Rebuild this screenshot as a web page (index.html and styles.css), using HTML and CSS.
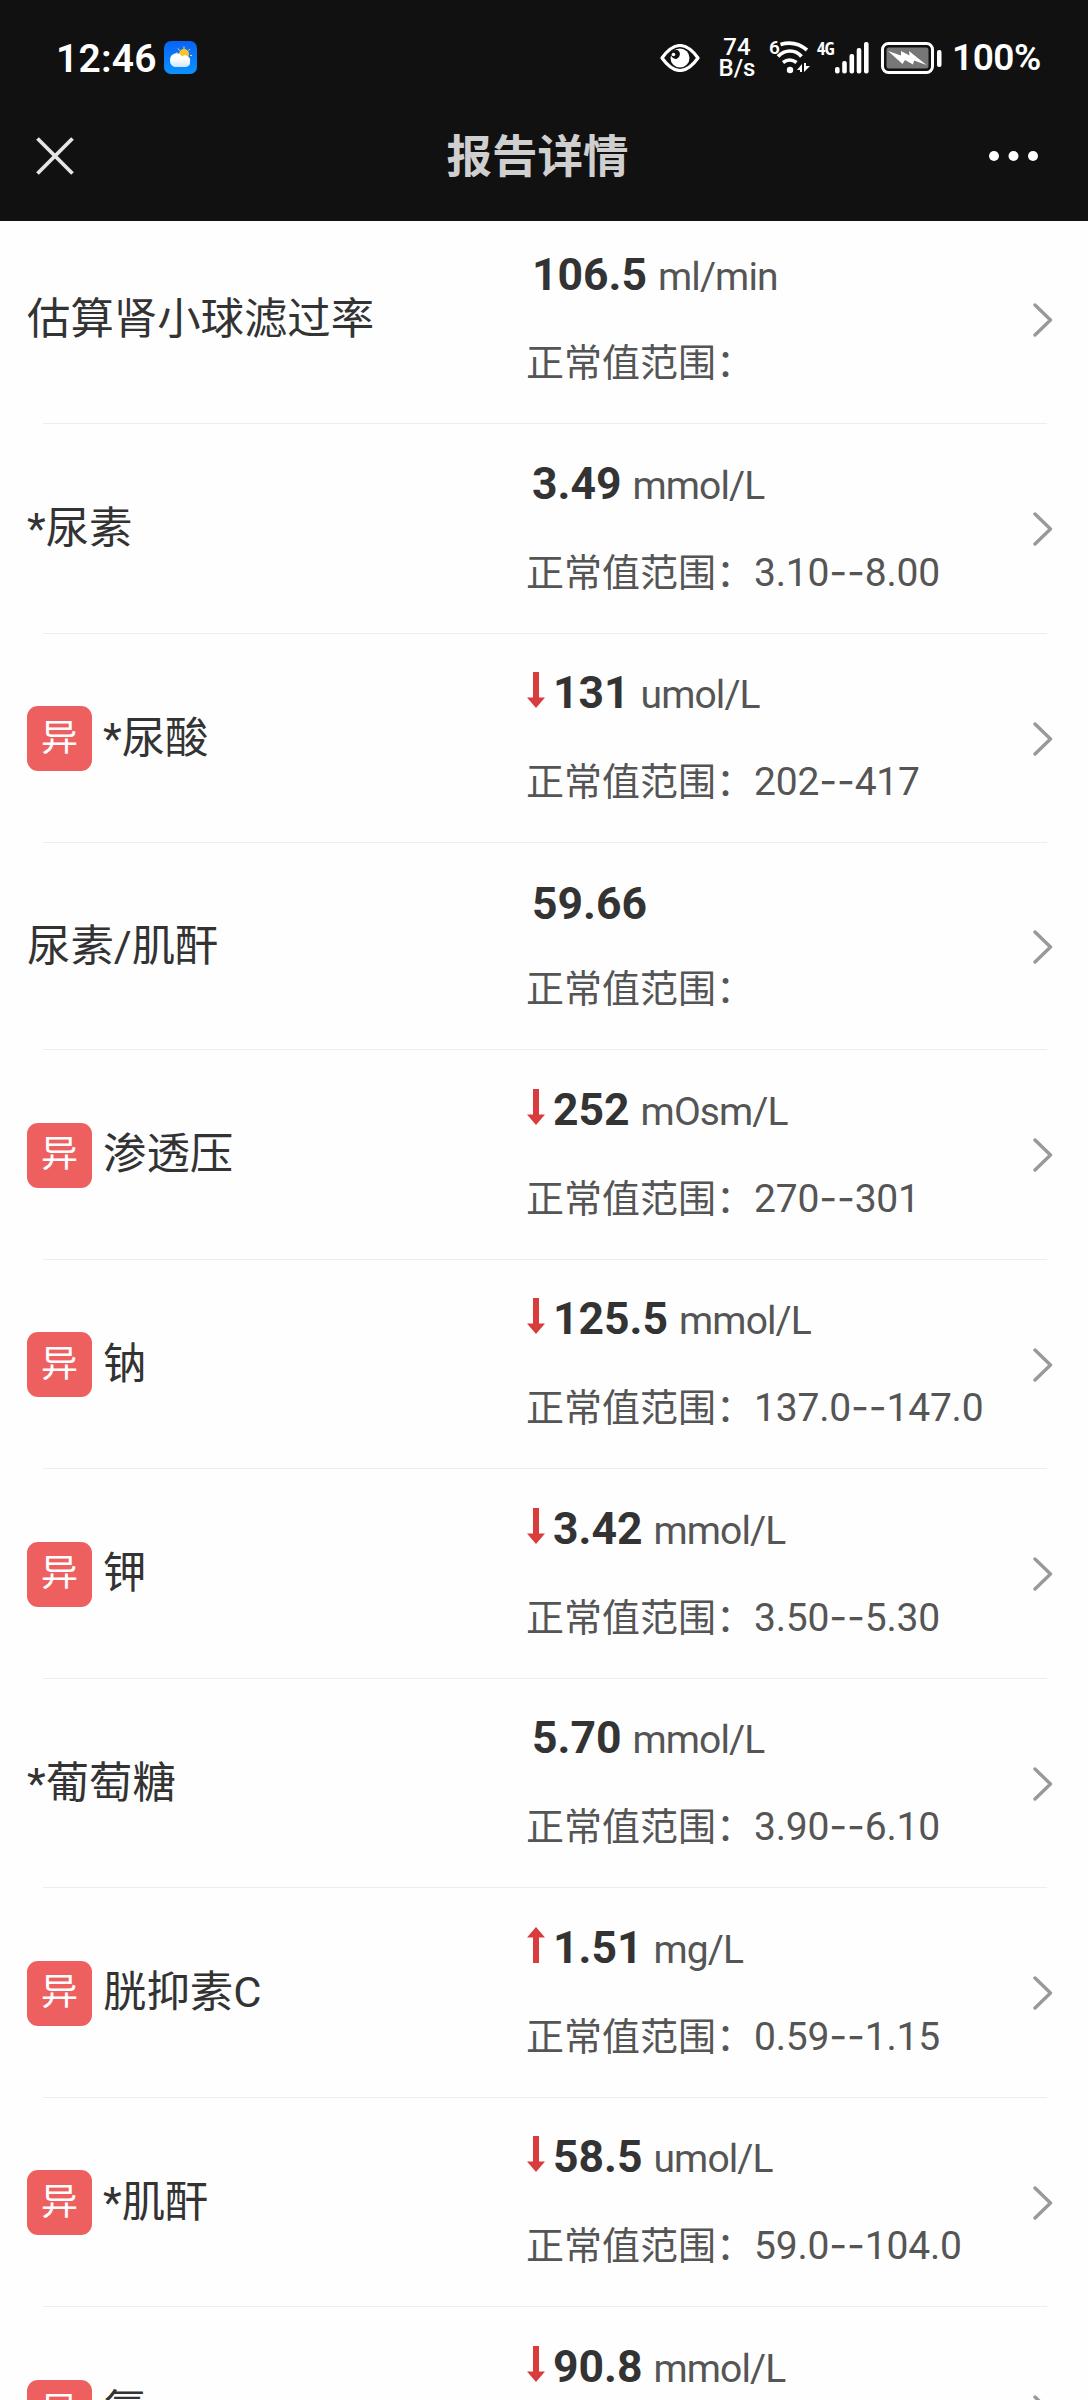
FILE: index.html
```html
<!DOCTYPE html>
<html lang="zh-CN">
<head>
    <meta charset="UTF-8">
    <meta name="viewport" content="width=device-width, initial-scale=1.0">
    <title>报告详情</title>
    <link rel="stylesheet" href="styles.css">
</head>
<body>
    <header class="header">
        <div class="status-bar">
            <span class="time">12:46</span>
            <svg class="weather" width="33" height="33" viewBox="0 0 33 33">
                <defs>
                    <linearGradient id="sky" x1="0" y1="0" x2="0" y2="1">
                        <stop offset="0" stop-color="#0a62f5"/>
                        <stop offset="1" stop-color="#0a93ff"/>
                    </linearGradient>
                    <linearGradient id="cloud" x1="0" y1="0" x2="0" y2="1">
                        <stop offset="0.4" stop-color="#fff"/>
                        <stop offset="1" stop-color="#cfe6fb"/>
                    </linearGradient>
                </defs>
                <rect width="33" height="33" rx="7" fill="url(#sky)"/>
                <path d="M20 8V5.500M15.500 9.500L14 7.500M24.500 9.500L26 8M26 14.500H28M13.500 12L12.500 11.500" stroke="#f8dc7a" stroke-width="1"/>
                <circle cx="20" cy="13" r="5" fill="#fcc52c"/>
                <path d="M11 26a5.500 6.500 0 0 1-5-7a6.500 7 0 0 1 12-3.500a5 5 0 0 1 8 5a5 5 0 0 1-4 5.500z" fill="url(#cloud)"/>
            </svg>
            <svg class="eye" width="40" height="28" viewBox="0 0 40 28">
                <path d="M2 14Q20-11 38 14Q20 39 2 14z" fill="none" stroke="#fff" stroke-width="3.200" stroke-linejoin="round"/>
                <circle cx="20" cy="14" r="9.500" fill="#fff"/>
                <path d="M11 9.500a6 6 0 0 1 6.500-3.500a5 5 0 0 1-1 9a5 5 0 0 1-5.500-5.500z" fill="#111"/>
                <circle cx="13.500" cy="10.500" r="1.800" fill="#fff"/>
            </svg>
            <div class="speed"><span>74</span><span>B/s</span></div>
            <span class="wifi-gen">6</span>
            <svg class="wifi" width="34" height="34" viewBox="0 0 34 34">
                <g fill="none" stroke="#fff" stroke-width="3.600">
                    <path d="M2 15.500Q7 10 14 10T25.500 15.500"/>
                    <path d="M4.500 3.500Q19-1 31 9"/>
                    <path d="M7 21.500Q13.500 16.500 20.500 21.500"/>
                </g>
                <circle cx="14" cy="29" r="3.200" fill="#fff"/>
                <path d="M21 29l5-6v8h-2v-2zM28 22v9l6-6h-4v-3z" fill="#fff"/>
            </svg>
            <span class="net">4G</span>
            <svg class="signal" width="34" height="32" viewBox="0 0 34 32">
                <g fill="#fff">
                    <rect x="0" y="25" width="4.600" height="6.500" rx="2"/>
                    <rect x="7.200" y="19" width="4.600" height="12.500" rx="2"/>
                    <rect x="14.500" y="12" width="4.600" height="19.500" rx="2"/>
                    <rect x="21.700" y="6" width="4.600" height="25.500" rx="2"/>
                    <rect x="29" y="0" width="4.600" height="31.500" rx="2"/>
                </g>
            </svg>
            <svg class="battery" width="62" height="32" viewBox="0 0 62 32">
                <rect x="1.500" y="1.500" width="50" height="29" rx="6" fill="none" stroke="#fff" stroke-width="3"/>
                <rect x="5.500" y="5.500" width="42" height="21" rx="2.500" fill="#777"/>
                <path d="M7 9L20 13.500L20 9L28.500 13.500L28 9L45.500 23L33 18.500L32 22.500L24 18L21.500 22z" fill="#fff"/>
                <rect x="56" y="8" width="4.500" height="17" rx="2" fill="#fff"/>
            </svg>
            <span class="percent">100%</span>
        </div>
        <div class="nav-bar">
            <svg width="38" height="38" viewBox="0 0 38 38">
                <path d="M1.500 1.500L36.500 36.500M36.500 1.500L1.500 36.500" stroke="#e6e6e6" stroke-width="3.800"/>
            </svg>
            <h1>报告详情</h1>
            <svg width="50" height="12" viewBox="0 0 50 12" fill="#fff">
                <circle cx="6" cy="6" r="5"/>
                <circle cx="25.500" cy="6" r="5"/>
                <circle cx="45" cy="6" r="5"/>
            </svg>
        </div>
    </header>

    <main class="list" id="lista"></main>

    <script>
        const items = [
            { name: '估算肾小球滤过率', value: '106.5', unit: 'ml/min', range: '' },
            { name: '*尿素', value: '3.49', unit: 'mmol/L', range: '3.10--8.00' },
            { name: '*尿酸', value: '131', unit: 'umol/L', range: '202--417', flag: 'down' },
            { name: '尿素/肌酐', value: '59.66', unit: '', range: '' },
            { name: '渗透压', value: '252', unit: 'mOsm/L', range: '270--301', flag: 'down' },
            { name: '钠', value: '125.5', unit: 'mmol/L', range: '137.0--147.0', flag: 'down' },
            { name: '钾', value: '3.42', unit: 'mmol/L', range: '3.50--5.30', flag: 'down' },
            { name: '*葡萄糖', value: '5.70', unit: 'mmol/L', range: '3.90--6.10' },
            { name: '胱抑素C', value: '1.51', unit: 'mg/L', range: '0.59--1.15', flag: 'up' },
            { name: '*肌酐', value: '58.5', unit: 'umol/L', range: '59.0--104.0', flag: 'down' },
            { name: '氯', value: '90.8', unit: 'mmol/L', range: '', flag: 'down' }
        ];

        const arrows = {
            down: 'M6 0h6v25.500h6L9 36L0 25.500h6z',
            up: 'M9 0l9 10.500h-6V36H6V10.500H0z'
        };

        document.getElementById('lista').innerHTML = items.map(item => `
            <div class="item ${item.unit ? '' : 'no-unit'}">
                <div class="name">
                    ${item.flag ? '<span class="badge">异</span>' : ''}
                    <span>${item.name}</span>
                </div>
                <div class="result">
                    <div class="value ${item.flag ? 'flagged' : ''}">
                        ${item.flag ? `<svg width="18" height="36" viewBox="0 0 18 36"><path d="${arrows[item.flag]}" fill="#d83c3c"/></svg>` : ''}
                        <b>${item.value}</b>
                        <span class="unit">${item.unit}</span>
                    </div>
                    <div class="range">正常值范围：<span class="limits">${item.range.replace('--', '<i>--</i>')}</span></div>
                </div>
                <svg class="chevron" width="20" height="34" viewBox="0 0 20 34">
                    <path d="M2 2L17.500 17L2 32" fill="none" stroke="#999" stroke-width="3.400" stroke-linecap="round" stroke-linejoin="round"/>
                </svg>
            </div>
        `).join('');
    </script>
</body>
</html>
```

FILE: styles.css
```css
* { box-sizing: border-box; }
body { margin: 0; height: 2400px; overflow: hidden; background: #fefefe; color: #333; font-family: Roboto, "Noto Sans CJK SC", sans-serif; }
svg { display: block; flex: none; }

.header { height: 221px; background: #111; color: #fff; }
.status-bar { display: flex; align-items: center; height: 115px; padding-left: 56px; white-space: nowrap; }
.time { width: 108px; padding-top: 2px; font-size: 39px; font-weight: 600; letter-spacing: 0.2px; }
.eye { margin-left: 463px; }
.speed { display: flex; flex-direction: column; align-items: center; width: 36px; margin-left: 19px; font-size: 24px; line-height: 21px; font-weight: 500; }
.wifi-gen { width: 8px; margin: -20px 0 0 14px; font-size: 19px; line-height: 20px; font-weight: 600; }
.wifi { margin-left: -1px; }
.net { width: 18px; margin: -20px 0 0 7px; font: 700 18px/20px "Open Sans", sans-serif; font-stretch: 75%; letter-spacing: -1px; }
.signal { margin-left: 0; }
.battery { margin-left: 12px; }
.percent { margin-left: 9px; font-size: 37px; font-weight: 600; letter-spacing: -0.5px; }

.nav-bar { display: flex; align-items: center; justify-content: space-between; height: 82px; padding: 0 50px 0 36px; }
.nav-bar h1 { margin: 0; padding: 4px 0 0 13px; font-size: 45.500px; font-weight: 700; line-height: 60px; color: #cfcfcf; }

.item { display: flex; align-items: center; height: 209.500px; padding: 1px 35px 0 27px; background: linear-gradient(#eee, #eee) 43px 100% / 1004px 1px no-repeat; }
/* the list is scrolled a little under the header */
.item:first-child { margin-top: -6.500px; }
.item.no-unit { height: 207px; }
.name { display: flex; align-items: center; width: 499px; font-size: 43.400px; line-height: 60px; }
.badge { display: flex; align-items: center; justify-content: center; width: 65px; height: 65px; margin-right: 11px; border-radius: 11px; background: #ee5f5f; color: #fff; font-size: 37px; }
.result { flex: 1; }
.value { display: flex; align-items: baseline; height: 58px; margin-top: -2px; padding-left: 6px; line-height: 58px; white-space: pre; }
.flagged { padding-left: 1px; }
.flagged svg { margin-right: 8px; }
.value b { font-size: 44.500px; }
.unit { margin-left: 11px; font-size: 39px; letter-spacing: -0.9px; color: #555; }
.range { margin-top: 30px; font-size: 38px; line-height: 58px; color: #555; white-space: nowrap; }
.no-unit .range { margin-top: 27px; }
.limits { font-size: 39px; letter-spacing: -0.200px; }
.limits i { font-family: Inter, sans-serif; font-style: normal; }
```
